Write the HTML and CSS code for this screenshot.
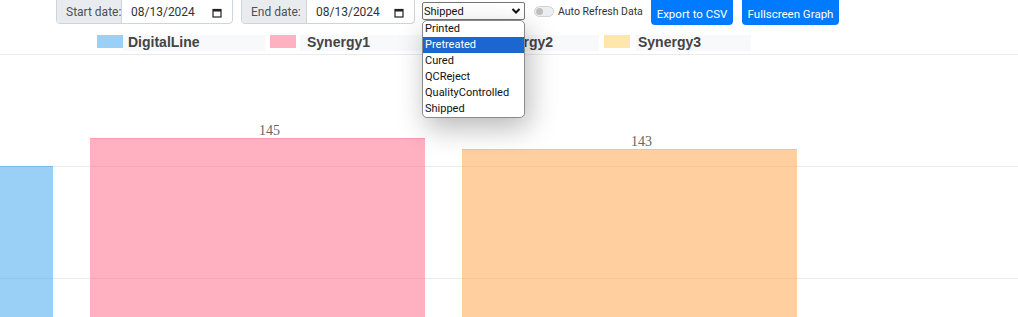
FILE: index.html
```html
<!DOCTYPE html>
<html lang="en">
<head>
    <meta charset="UTF-8">
    <title>Production Graph</title>
    <link rel="stylesheet" href="styles.css">
</head>
<body>
    <div class="page">
        <div class="toolbar">
            <div class="date-group start">
                <span class="date-label">Start date:</span>
                <span class="date-input">08/13/2024
                    <svg class="cal" width="10" height="10" viewBox="0 0 10 10"><rect x="1" y="1.5" width="8" height="7.5" fill="none" stroke="#222" stroke-width="1.2"/><rect x="1" y="1.5" width="8" height="2" fill="#222"/></svg>
                </span>
            </div>
            <div class="date-group end">
                <span class="date-label">End date:</span>
                <span class="date-input">08/13/2024
                    <svg class="cal" width="10" height="10" viewBox="0 0 10 10"><rect x="1" y="1.5" width="8" height="7.5" fill="none" stroke="#222" stroke-width="1.2"/><rect x="1" y="1.5" width="8" height="2" fill="#222"/></svg>
                </span>
            </div>
            <div class="select-wrap">
                <div class="select">Shipped
                    <svg class="chev" width="10" height="8" viewBox="0 0 10 8"><path d="M1.5 2 L5 5.5 L8.5 2" fill="none" stroke="#111" stroke-width="2"/></svg>
                </div>
                <ul class="options">
                    <li>Printed</li>
                    <li class="active">Pretreated</li>
                    <li>Cured</li>
                    <li>QCReject</li>
                    <li>QualityControlled</li>
                    <li>Shipped</li>
                </ul>
            </div>
            <label class="switch"><span class="knob"></span></label>
            <span class="switch-text">Auto Refresh Data</span>
            <button class="btn export">Export to CSV</button>
            <button class="btn full">Fullscreen Graph</button>
        </div>

        <div class="legend">
            <div class="legend-item item-1"><span class="swatch blue"></span><span class="legend-text">DigitalLine</span></div>
            <div class="legend-item item-2"><span class="swatch pink"></span><span class="legend-text">Synergy1</span></div>
            <div class="legend-item item-3"><span class="swatch pink"></span><span class="legend-text">Synergy2</span></div>
            <div class="legend-item item-4"><span class="swatch yellow"></span><span class="legend-text">Synergy3</span></div>
        </div>

        <div class="chart">
            <div class="grid" style="top: 111px"></div>
            <div class="grid" style="top: 223px"></div>
            <div class="bars">
                <div class="bar-col" style="padding-top: 111px"><div class="bar blue"></div></div>
                <div class="bar-col" style="padding-top: 83px"><span class="value">145</span><div class="bar pink"></div></div>
                <div class="bar-col" style="padding-top: 94px"><span class="value">143</span><div class="bar orange"></div></div>
            </div>
        </div>
    </div>
</body>
</html>
```

FILE: styles.css
```css
body {
    margin: 0;
    font-family: Roboto, "Noto Sans", sans-serif;
    color: #212529;
    background: #fff;
    overflow: hidden;
}
.page {
    margin-top: -6px;
}
.toolbar {
    display: flex;
    align-items: flex-start;
    padding-left: 56px;
    height: 40px;
    font-size: 12px;
}
.date-group {
    display: flex;
    box-sizing: border-box;
    height: 30px;
    border: 1px solid #ced4da;
    border-radius: 4px;
    color: #495057;
}
.date-group.start {
    width: 177px;
    margin-right: 8px;
}
.date-group.end {
    width: 174px;
    margin-right: 7px;
}
.date-label {
    display: flex;
    align-items: center;
    box-sizing: border-box;
    width: 65px;
    padding: 6px 0 0 9px;
    background: #e9ecef;
    border-right: 1px solid #ced4da;
    border-radius: 4px 0 0 4px;
    white-space: nowrap;
}
.date-input {
    display: flex;
    flex: 1;
    align-items: center;
    justify-content: space-between;
    padding: 6px 10px 0 9px;
    color: #333;
}
.cal {
    margin-top: 1px;
}
.select-wrap {
    position: relative;
    margin: 8px 9px 0 0;
}
.select {
    display: flex;
    align-items: center;
    justify-content: space-between;
    box-sizing: border-box;
    width: 103px;
    height: 18px;
    padding: 0 3px 0 1px;
    border: 1px solid #767676;
    border-radius: 2px;
    font-size: 11px;
    color: #111;
}
.options {
    position: absolute;
    top: 18px;
    left: 0;
    box-sizing: border-box;
    width: 103px;
    margin: 0;
    padding: 0;
    list-style: none;
    background: #fff;
    border: 1px solid #8a8a8a;
    border-radius: 5px;
    box-shadow: 4px 10px 28px rgba(0, 0, 0, .28);
    font-size: 11px;
    color: #111;
    z-index: 5;
    overflow: hidden;
}
.options li {
    height: 16px;
    line-height: 16px;
    padding-left: 2px;
}
.options li.active {
    background: #1c66d1;
    color: #fff;
}
.switch {
    position: relative;
    box-sizing: border-box;
    width: 20px;
    height: 11px;
    margin: 12px 4px 0 0;
    border: 1px solid #d3d3d3;
    border-radius: 6px;
    background: #eceff1;
}
.knob {
    position: absolute;
    top: 1px;
    left: 1px;
    width: 7px;
    height: 7px;
    border-radius: 50%;
    background: #c0c0c0;
}
.switch-text {
    width: 93px;
    margin-top: 12px;
    font-size: 10.5px;
    line-height: 12px;
    color: #333;
    white-space: nowrap;
}
.btn {
    box-sizing: border-box;
    height: 31px;
    padding: 8px 0 0;
    margin-right: 9px;
    border: none;
    border-radius: 4px;
    background: #007bff;
    color: #fff;
    font-family: Roboto, "Noto Sans", sans-serif;
    font-size: 11.5px;
    white-space: nowrap;
    text-align: center;
}
.export {
    width: 82px;
}
.full {
    width: 97px;
}
.legend {
    display: flex;
    padding: 1px 0 0 97px;
    height: 19px;
    border-bottom: 1px solid #ebebeb;
}
.legend-item {
    display: flex;
    align-items: flex-start;
}
.swatch {
    width: 26px;
    height: 13px;
}
.swatch.blue { background: #9ad0f5; }
.swatch.pink { background: #ffb1c1; }
.swatch.yellow { background: #ffe6aa; }
.legend-text {
    box-sizing: border-box;
    height: 16px;
    background: #f8f9fb;
    font-family: "Liberation Sans", Arial, sans-serif;
    font-weight: bold;
    font-size: 14px;
    line-height: 14px;
    color: #444;
}
.item-1 .legend-text { width: 142px; padding-left: 5px; margin-right: 5px; }
.item-2 .legend-text { width: 132px; padding-left: 7px; margin-left: 4px; margin-right: 5px; }
.item-3 .legend-text { width: 132px; padding-left: 23px; margin-left: 4px; margin-right: 5px; }
.item-4 .legend-text { width: 115px; padding-left: 2px; margin-left: 6px; }
.chart {
    position: relative;
    height: 270px;
    overflow: hidden;
}
.grid {
    position: absolute;
    left: 0;
    right: 0;
    height: 1px;
    background: #ebebeb;
}
.bars {
    display: flex;
    gap: 37px;
    margin-left: -282px;
}
.bar-col {
    position: relative;
    width: 335px;
}
.value {
    position: absolute;
    left: 24px;
    right: 0;
    margin-top: -15px;
    text-align: center;
    font-family: "Liberation Serif", "Times New Roman", serif;
    font-size: 14px;
    color: #666;
}
.bar {
    height: 300px;
}
.bar.blue { background: rgba(54, 162, 235, .5); border-top: 1px solid rgba(54, 162, 235, .3); }
.bar.pink { background: rgba(255, 99, 132, .5); border-top: 1px solid rgba(255, 99, 132, .3); }
.bar.orange { background: rgba(255, 159, 64, .5); border-top: 1px solid rgba(255, 159, 64, .3); }
```
